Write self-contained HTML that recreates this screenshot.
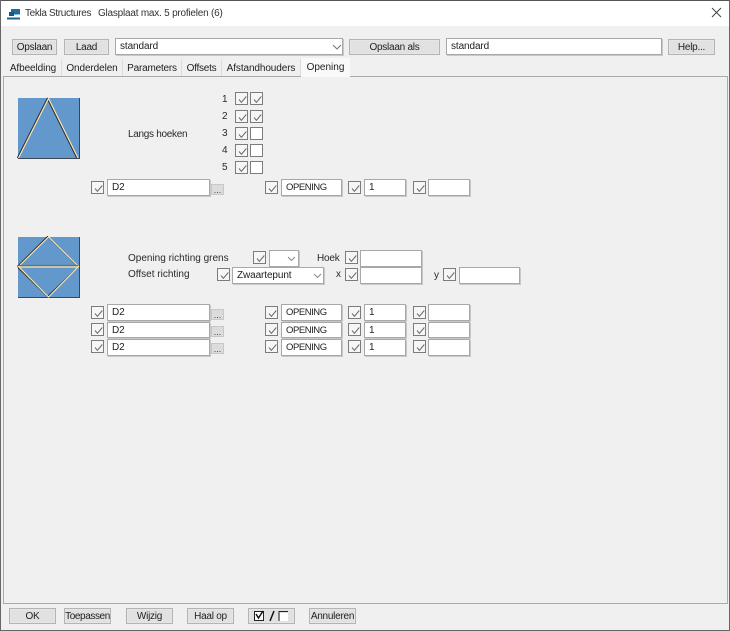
<!DOCTYPE html>
<html><head><meta charset="utf-8"><style>
html,body{margin:0;padding:0}
body{width:730px;height:631px;overflow:hidden;position:relative;background:#f0f0f0;font:10px/14px "Liberation Sans",sans-serif;color:#222;filter:blur(.25px)}
div,svg{position:absolute;box-sizing:border-box}
.t{white-space:nowrap}
.b{background:#e1e1e1;border:1px solid #b4b4b4;box-shadow:inset 0 0 0 1px #e6e6e6;text-align:center;height:16px;line-height:16px;letter-spacing:-.25px;white-space:nowrap}
.i{background:#fff;border:1px solid #a8a8a8;box-shadow:1px 1px 0 #c8c8c8;height:17px;padding-left:4px;line-height:16px;letter-spacing:-.1px;white-space:nowrap}
.o{font-size:9.500px;letter-spacing:-.45px}
.c{width:13px;height:13px;background:#f6f6f6;border:1px solid #7c7c7c}
.c svg{left:1px;top:1px}
.e{width:13px;height:13px;background:#fff;border:1px solid #7c7c7c}
.d{width:13px;height:11px;background:#dcdcdc;border:1px solid #c8c8c8;font-size:9px;line-height:10px;text-align:center;color:#444}
.tab{top:59px;height:17px;background:#f0f0f0;border-right:1px solid #dcdcdc;text-align:center;line-height:20px;letter-spacing:-.1px;white-space:nowrap}
.l{white-space:nowrap;color:#2a2a2a}
</style></head><body>
<svg width="0" height="0" style="position:absolute"><defs><symbol id="k" viewBox="0 0 11 11"><path d="M2 5.500L4.400 8.300L9.300 2.500" fill="none" stroke="#6a6a6a" stroke-width="1"/></symbol></defs></svg>
<div style="left:0;top:0;width:730px;height:26px;background:#fff"></div>
<div style="left:0;top:0;width:730px;height:1px;background:#555"></div>
<div style="left:0;top:0;width:1px;height:631px;background:#666"></div>
<div style="left:729px;top:0;width:1px;height:631px;background:#666"></div>
<div style="left:0;top:630px;width:730px;height:1px;background:#666"></div>
<svg style="left:7px;top:8px" width="14" height="13" viewBox="0 0 14 13"><path d="M4 1H13V6.500H4z" fill="#1f6d9e"/><path d="M2 4H7V8H2z" fill="#14577f"/><path d="M0 9.500H13V11.500H0z" fill="#1b6595"/></svg>
<div class="t" style="left:25px;top:7px;letter-spacing:-.35px;color:#333">Tekla Structures</div>
<div class="t" style="left:98px;top:7px;letter-spacing:-.22px;color:#333">Glasplaat max. 5 profielen (6)</div>
<svg style="left:711px;top:7px" width="11" height="11" viewBox="0 0 11 11"><path d="M1 1L10 10M10 1L1 10" stroke="#444" stroke-width="1" fill="none"/></svg>

<div class="b" style="left:12px;top:39px;width:45px">Opslaan</div>
<div class="b" style="left:64px;top:39px;width:45px">Laad</div>
<div class="i" style="left:115px;top:38px;width:228px">standard</div>
<svg style="left:332px;top:44px" width="10" height="6" viewBox="0 0 10 6"><path d="M1 1L5 5L9 1" fill="none" stroke="#777"/></svg>
<div class="b" style="left:349px;top:39px;width:91px">Opslaan als</div>
<div class="i" style="left:446px;top:38px;width:216px">standard</div>
<div class="b" style="left:668px;top:39px;width:47px">Help...</div>

<div style="left:3px;top:76px;width:725px;height:528px;border:1px solid #aaa;background:#f0f0f0"></div>
<div class="tab" style="left:5px;width:57px">Afbeelding</div>
<div class="tab" style="left:62px;width:61px">Onderdelen</div>
<div class="tab" style="left:123px;width:59px;letter-spacing:-.2px">Parameters</div>
<div class="tab" style="left:182px;width:40px;letter-spacing:-.25px">Offsets</div>
<div class="tab" style="left:222px;width:79px">Afstandhouders</div>
<div class="tab" style="left:301px;top:58px;width:49px;height:19px;background:#f9f9f9;line-height:20px;border:0;letter-spacing:0">Opening</div>

<svg style="left:17px;top:97px" width="63" height="63" viewBox="0 0 63 63">
<rect x="1" y="1" width="61" height="61" fill="#6298cb"/><path d="M1 61.500H62.500V1" fill="none" stroke="#3a4654" stroke-width="1"/>
<path d="M.3 61L30.300 1.500L59.800 61" fill="none" stroke="#2b2b24" stroke-width="1.100"/><path d="M1.500 61L31.500 1.500L61 61" fill="none" stroke="#f8e3b5" stroke-width="1.200"/></svg>
<div class="l" style="left:128px;top:128px;letter-spacing:-.3px">Langs hoeken</div>
<div class="l" style="left:222px;top:93px">1</div><div class="l" style="left:222px;top:110px">2</div><div class="l" style="left:222px;top:127px">3</div><div class="l" style="left:222px;top:144px">4</div><div class="l" style="left:222px;top:161px">5</div>
<div class="c" style="left:235px;top:92px"><svg width="11" height="11"><use href="#k"/></svg></div><div class="c" style="left:250px;top:92px"><svg width="11" height="11"><use href="#k"/></svg></div>
<div class="c" style="left:235px;top:110px"><svg width="11" height="11"><use href="#k"/></svg></div><div class="c" style="left:250px;top:110px"><svg width="11" height="11"><use href="#k"/></svg></div>
<div class="c" style="left:235px;top:127px"><svg width="11" height="11"><use href="#k"/></svg></div><div class="e" style="left:250px;top:127px"></div>
<div class="c" style="left:235px;top:144px"><svg width="11" height="11"><use href="#k"/></svg></div><div class="e" style="left:250px;top:144px"></div>
<div class="c" style="left:235px;top:161px"><svg width="11" height="11"><use href="#k"/></svg></div><div class="e" style="left:250px;top:161px"></div>

<div class="c" style="left:91px;top:181px"><svg width="11" height="11"><use href="#k"/></svg></div>
<div class="i" style="left:107px;top:179px;width:103px">D2</div><div class="d" style="left:211px;top:184px">...</div>
<div class="c" style="left:265px;top:181px"><svg width="11" height="11"><use href="#k"/></svg></div>
<div class="i o" style="left:281px;top:179px;width:61px">OPENING</div>
<div class="c" style="left:348px;top:181px"><svg width="11" height="11"><use href="#k"/></svg></div>
<div class="i" style="left:364px;top:179px;width:42px">1</div>
<div class="c" style="left:413px;top:181px"><svg width="11" height="11"><use href="#k"/></svg></div>
<div class="i" style="left:428px;top:179px;width:42px"></div>

<svg style="left:17px;top:236px" width="63" height="63" viewBox="0 0 63 63">
<rect x="1" y="1" width="61" height="61" fill="#6298cb"/><path d="M1 61.500H62.500V1" fill="none" stroke="#3a4654" stroke-width="1"/>
<path d="M.3 30.500L30.500 .5L60.500 30M.8 31.500L30.500 60.500L60.500 31.500" fill="none" stroke="#2b2b24" stroke-width="1.100"/><path d="M1.500 30.500L31.500 1L61.500 30.500L31.500 61z" fill="none" stroke="#f8e3b5" stroke-width="1.200"/>
<path d="M2 29.500H61" stroke="#8a6d2e" stroke-width="1.300"/><path d="M2 31H61" stroke="#f8e3b5" stroke-width="1.200"/></svg>
<div class="l" style="left:128px;top:252px">Opening richting grens</div>
<div class="l" style="left:128px;top:268px">Offset richting</div>
<div class="c" style="left:253px;top:251px"><svg width="11" height="11"><use href="#k"/></svg></div>
<div class="i" style="left:269px;top:250px;width:30px"></div>
<svg style="left:287px;top:256px" width="9" height="6" viewBox="0 0 9 6"><path d="M1 1L4.500 4.500L8 1" fill="none" stroke="#888"/></svg>
<div class="l" style="left:317px;top:252px;letter-spacing:-.2px">Hoek</div>
<div class="c" style="left:345px;top:251px"><svg width="11" height="11"><use href="#k"/></svg></div>
<div class="i" style="left:360px;top:250px;width:62px"></div>
<div class="c" style="left:217px;top:268px"><svg width="11" height="11"><use href="#k"/></svg></div>
<div class="i" style="left:232px;top:267px;width:92px">Zwaartepunt</div>
<svg style="left:313px;top:273px" width="9" height="6" viewBox="0 0 9 6"><path d="M1 1L4.500 4.500L8 1" fill="none" stroke="#888"/></svg>
<div class="l" style="left:336px;top:268px">x</div>
<div class="c" style="left:345px;top:268px"><svg width="11" height="11"><use href="#k"/></svg></div>
<div class="i" style="left:360px;top:267px;width:62px"></div>
<div class="l" style="left:434px;top:269px">y</div>
<div class="c" style="left:443px;top:268px"><svg width="11" height="11"><use href="#k"/></svg></div>
<div class="i" style="left:459px;top:267px;width:61px"></div>

<div class="c" style="left:91px;top:306px"><svg width="11" height="11"><use href="#k"/></svg></div>
<div class="i" style="left:107px;top:304px;width:103px">D2</div><div class="d" style="left:211px;top:309px">...</div>
<div class="c" style="left:265px;top:306px"><svg width="11" height="11"><use href="#k"/></svg></div>
<div class="i o" style="left:281px;top:304px;width:61px">OPENING</div>
<div class="c" style="left:348px;top:306px"><svg width="11" height="11"><use href="#k"/></svg></div>
<div class="i" style="left:364px;top:304px;width:42px">1</div>
<div class="c" style="left:413px;top:306px"><svg width="11" height="11"><use href="#k"/></svg></div>
<div class="i" style="left:428px;top:304px;width:42px"></div>

<div class="c" style="left:91px;top:323px"><svg width="11" height="11"><use href="#k"/></svg></div>
<div class="i" style="left:107px;top:322px;width:103px;height:16px;line-height:15px">D2</div><div class="d" style="left:211px;top:326px">...</div>
<div class="c" style="left:265px;top:323px"><svg width="11" height="11"><use href="#k"/></svg></div>
<div class="i o" style="left:281px;top:322px;width:61px;height:16px;line-height:15px">OPENING</div>
<div class="c" style="left:348px;top:323px"><svg width="11" height="11"><use href="#k"/></svg></div>
<div class="i" style="left:364px;top:322px;width:42px;height:16px;line-height:15px">1</div>
<div class="c" style="left:413px;top:323px"><svg width="11" height="11"><use href="#k"/></svg></div>
<div class="i" style="left:428px;top:322px;width:42px;height:16px"></div>

<div class="c" style="left:91px;top:340px"><svg width="11" height="11"><use href="#k"/></svg></div>
<div class="i" style="left:107px;top:339px;width:103px;line-height:15px">D2</div><div class="d" style="left:211px;top:343px">...</div>
<div class="c" style="left:265px;top:340px"><svg width="11" height="11"><use href="#k"/></svg></div>
<div class="i o" style="left:281px;top:339px;width:61px;line-height:15px">OPENING</div>
<div class="c" style="left:348px;top:340px"><svg width="11" height="11"><use href="#k"/></svg></div>
<div class="i" style="left:364px;top:339px;width:42px;line-height:15px">1</div>
<div class="c" style="left:413px;top:340px"><svg width="11" height="11"><use href="#k"/></svg></div>
<div class="i" style="left:428px;top:339px;width:42px"></div>

<div class="b" style="left:9px;top:608px;width:47px">OK</div>
<div class="b" style="left:64px;top:608px;width:47px;letter-spacing:-.4px">Toepassen</div>
<div class="b" style="left:126px;top:608px;width:47px">Wijzig</div>
<div class="b" style="left:187px;top:608px;width:47px">Haal op</div>
<div class="b" style="left:248px;top:608px;width:47px"></div>
<svg style="left:253px;top:610px" width="38" height="12" viewBox="0 0 38 12"><rect x="1.500" y="1.500" width="9" height="9" fill="#fff" stroke="#222"/><path d="M3 4L5.500 8L10 1" fill="none" stroke="#111" stroke-width="1.500"/><path d="M17 11L21 1" stroke="#111" stroke-width="1.500"/><path d="M26 11V1.500H35" fill="none" stroke="#222"/><path d="M27 11V3H35V11z" fill="#fff"/></svg>
<div class="b" style="left:309px;top:608px;width:47px">Annuleren</div>
</body></html>
